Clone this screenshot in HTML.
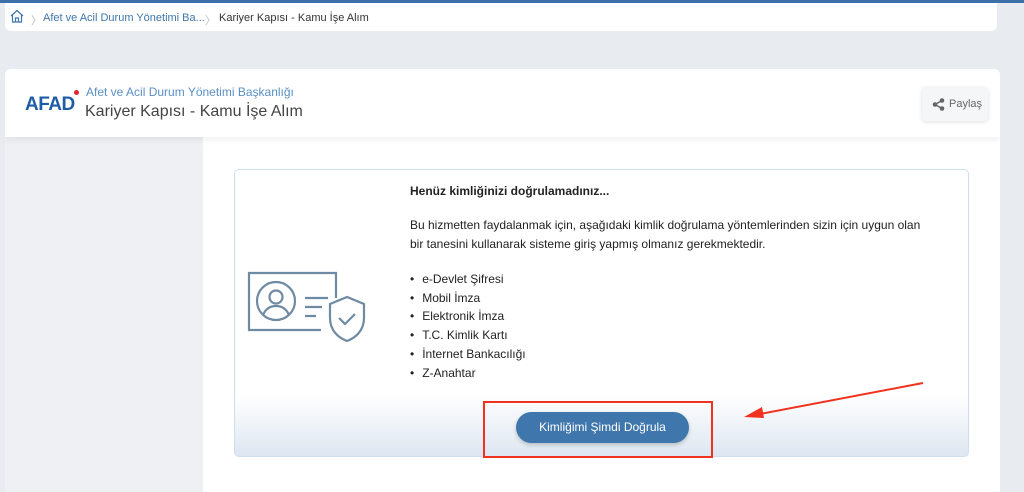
<!DOCTYPE html>
<html><head><meta charset="utf-8"><style>
*{margin:0;padding:0;box-sizing:border-box}
html,body{overflow:hidden}
body{width:1024px;height:492px;background:#e8ebef;font-family:"Liberation Sans",sans-serif;position:relative}
.top{position:absolute;left:0;top:0;width:1024px;height:3px;background:#3d6fa8}
.bc{position:absolute;left:5px;top:3px;width:992px;height:28px;background:#fff;border-radius:0 0 6px 6px;font-size:11px;color:#333}
.bc span{position:absolute;top:9px}
.card{position:absolute;left:5px;top:69px;width:995px;height:423px;background:#fff;border-radius:6px 6px 0 0;overflow:hidden}
.side{position:absolute;left:0;top:68px;width:198px;height:355px;background:#eef0f3}
.hdr{position:absolute;left:0;top:0;width:995px;height:68px;background:#fff;box-shadow:0 3px 6px rgba(0,0,0,.06)}
.box{position:absolute;left:229px;top:100px;width:735px;height:288px;border:1px solid #cfdeee;border-radius:5px;background:linear-gradient(#fff 0,#fff 225px,#dce6f1 288px)}
.t{position:absolute;font-size:12px;color:#222}
ul{position:absolute;left:175px;top:100px;font-size:12px;color:#222;list-style:none;line-height:18.7px}
ul li:before{content:"•";margin-right:8px}
.btn{position:absolute;left:281px;top:242px;width:173px;height:31px;border-radius:16px;background:#3f76ab;color:#fff;font-size:12px;text-align:center;line-height:31px;box-shadow:0 2px 4px rgba(0,0,0,.2)}
.red{position:absolute;left:483px;top:401px;width:230px;height:57px;border:2px solid #f0321e}
</style></head><body>
<div class="top"></div>
<div class="bc">
<svg style="position:absolute;left:5px;top:6px" width="14" height="14" viewBox="0 0 14 14" fill="none" stroke="#3f76ab" stroke-width="1.2"><path d="M1 7L7 1.5 13 7M2.5 5.5V13H11.5V5.5M5.5 13V9H8.5V13"/></svg>
<span style="left:26px;color:#bbb">〉</span><span style="left:38px;color:#3f76ab">Afet ve Acil Durum Yönetimi Ba...</span>
<span style="left:200px;color:#bbb">〉</span><span style="left:214px">Kariyer Kapısı - Kamu İşe Alım</span>
</div>
<div class="card">
<div class="side"></div>
<div class="hdr">
<div style="position:absolute;left:20px;top:25px;font-size:19px;font-weight:bold;color:#1f5ca6;letter-spacing:-0.5px">AFAD</div>
<div style="position:absolute;left:69px;top:21px;width:5px;height:5px;border-radius:50%;background:#e3262d"></div>
<div style="position:absolute;left:81px;top:16px;font-size:12px;color:#5a8fc6">Afet ve Acil Durum Yönetimi Başkanlığı</div>
<div style="position:absolute;left:80px;top:34px;font-size:16px;color:#444">Kariyer Kapısı - Kamu İşe Alım</div>
<div style="position:absolute;left:917px;top:18px;width:66px;height:34px;background:#f5f6f8;border-radius:4px;box-shadow:0 1px 4px rgba(0,0,0,.12);font-size:11px;color:#666;line-height:34px;padding-left:27px">Paylaş
<svg style="position:absolute;left:10px;top:11px" width="13" height="13" viewBox="0 0 13 13" fill="#666"><circle cx="10" cy="2.5" r="2.3"/><circle cx="10" cy="10.5" r="2.3"/><circle cx="3" cy="6.5" r="2.3"/><path d="M3 6.5L10 2.5M3 6.5L10 10.5" stroke="#666" stroke-width="1.4"/></svg></div>
</div>
<div class="box">
<svg style="position:absolute;left:11px;top:100px" width="130" height="80" viewBox="0 0 130 80" fill="none" stroke="#6f8aa3" stroke-width="2.2"><path d="M90 28V3H3V60H75"/><circle cx="30" cy="31" r="19"/><circle cx="30" cy="27" r="6.5"/><path d="M17 45c3-7 8-9 13-9s10 2 13 9"/><path d="M59 28H82M59 37H76M59 46H70"/><path d="M101 27l-17 7v14c0 13 9 20 17 23 8-3 17-10 17-23V34z"/><path d="M93 48l6 6 10-10"/></svg>
<div class="t" style="left:175px;top:14px;font-weight:bold">Henüz kimliğinizi doğrulamadınız...</div>
<div class="t" style="left:175px;top:46px;line-height:19px;width:518px">Bu hizmetten faydalanmak için, aşağıdaki kimlik doğrulama yöntemlerinden sizin için uygun olan bir tanesini kullanarak sisteme giriş yapmış olmanız gerekmektedir.</div>
<ul><li>e-Devlet Şifresi</li><li>Mobil İmza</li><li>Elektronik İmza</li><li>T.C. Kimlik Kartı</li><li>İnternet Bankacılığı</li><li>Z-Anahtar</li></ul>
<div class="btn">Kimliğimi Şimdi Doğrula</div>
</div>
</div>
<div class="red"></div>
<svg style="position:absolute;left:740px;top:380px" width="190" height="40"><path d="M183 3L20 34" stroke="#f0321e" stroke-width="2"/><path d="M4 37L22 27 24 38z" fill="#f0321e"/></svg>
</body></html>
